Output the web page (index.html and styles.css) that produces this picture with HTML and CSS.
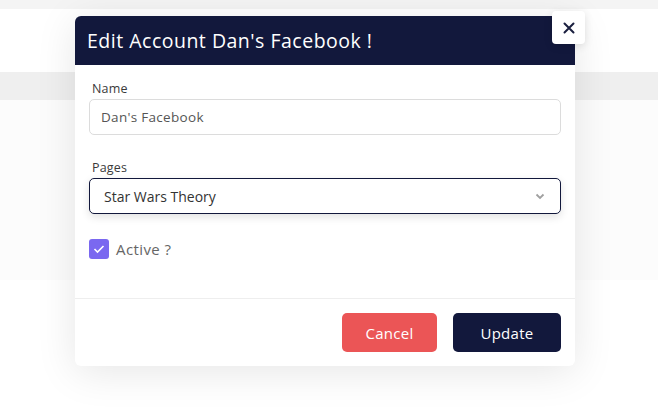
FILE: index.html
```html
<html>
<head>
<meta name="viewport" content="width=device-width, initial-scale=1.0">
<link rel="stylesheet" href="styles.css">
</head>
<body>

<div class="page">
    <div class="topbar"></div>
    <div class="navbar"></div>
    <div class="band"></div>
    <div class="content"></div>
</div>

<div class="modal">
    <button class="close" type="button">
        <svg width="12" height="12" viewBox="0 0 12 12"><path d="M1.5 1.5 L10.5 10.5 M10.5 1.5 L1.5 10.5" stroke="#1a1f3f" stroke-width="2" stroke-linecap="round"/></svg>
    </button>

    <div class="modal-header">Edit Account Dan's Facebook !</div>

    <div class="modal-body">
        <div class="field">
            <label class="label">Name</label>
            <div class="input">Dan's Facebook</div>
        </div>

        <div class="field">
            <label class="label">Pages</label>
            <div class="select">
                <span>Star Wars Theory</span>
                <svg width="10" height="7" viewBox="0 0 10 7"><path d="M1.5 1.5 L5 5 L8.5 1.5" fill="none" stroke="#a0a0a0" stroke-width="1.8"/></svg>
            </div>
        </div>

        <div class="check-row">
            <span class="checkbox">
                <svg width="12" height="10" viewBox="0 0 12 10"><path d="M1.5 5 L4.5 8 L10.5 2" fill="none" stroke="#fff" stroke-width="1.6"/></svg>
            </span>
            <span class="check-label">Active ?</span>
        </div>
    </div>

    <div class="modal-footer">
        <button class="btn btn-cancel" type="button">Cancel</button>
        <button class="btn btn-update" type="button">Update</button>
    </div>
</div>

</body>
</html>
```

FILE: styles.css
```css
body, html {
    margin: 0;
    padding: 0;
    width: 100%;
    height: 100%;
    background: #ffffff;
    font-family: "Open Sans", "DejaVu Sans", sans-serif;
    overflow: hidden;
}

.page {
    display: flex;
    flex-direction: column;
}

.topbar {
    height: 9px;
    background: #f4f4f4;
}

.navbar {
    height: 63px;
    background: #ffffff;
}

.band {
    height: 28px;
    background: #efefef;
}

.content {
    height: 180px;
    background: #fcfcfc;
}

.modal {
    position: absolute;
    left: 75px;
    top: 16px;
    width: 500px;
    background: #ffffff;
    border-radius: 6px;
    box-shadow: 0 6px 40px rgba(0, 0, 0, 0.10);
}

.close {
    position: absolute;
    left: 477px;
    top: -5px;
    width: 33px;
    height: 33px;
    border: none;
    border-radius: 4px;
    background: #ffffff;
    box-shadow: 0 2px 8px rgba(0, 0, 0, 0.12);
    display: flex;
    align-items: center;
    justify-content: center;
    padding: 0;
}

.modal-header {
    height: 49px;
    background: #12183c;
    color: #ffffff;
    border-radius: 6px 6px 0 0;
    padding-left: 12px;
    font-size: 19.5px;
    letter-spacing: 0.5px;
    line-height: 49px;
}

.modal-body {
    padding: 16px 14px 39px 14px;
}

.field {
    margin-bottom: 25px;
}

.label {
    display: block;
    font-size: 12.5px;
    color: #3a3a3a;
    line-height: 16px;
    margin-bottom: 2px;
    padding-left: 3px;
    letter-spacing: 0.2px;
}

.input {
    height: 34px;
    border: 1px solid #dcdcdc;
    border-radius: 5px;
    padding-left: 11px;
    font-size: 13.5px;
    color: #555555;
    line-height: 34px;
    letter-spacing: 0.3px;
}

.select {
    height: 34px;
    border: 1px solid #12183c;
    border-radius: 5px;
    padding: 0 15px 0 14px;
    font-size: 14px;
    color: #333333;
    display: flex;
    align-items: center;
    justify-content: space-between;
    box-shadow: 0 3px 8px rgba(0, 0, 0, 0.12);
}

.check-row {
    display: flex;
    align-items: center;
    gap: 7px;
}

.checkbox {
    width: 20px;
    height: 20px;
    border-radius: 3px;
    background: #7a68f0;
    display: flex;
    align-items: center;
    justify-content: center;
}

.check-label {
    font-size: 15px;
    color: #666666;
    letter-spacing: 0.4px;
}

.modal-footer {
    border-top: 1px solid #eeeeee;
    padding: 14px 14px 14px 14px;
    display: flex;
    justify-content: flex-end;
    gap: 16px;
}

.btn {
    height: 39px;
    border: none;
    border-radius: 5px;
    color: #ffffff;
    font-family: "Open Sans", "DejaVu Sans", sans-serif;
    font-size: 15px;
    letter-spacing: 0.3px;
}

.btn-cancel {
    width: 95px;
    background: #eb5556;
}

.btn-update {
    width: 108px;
    background: #12183c;
}
```
